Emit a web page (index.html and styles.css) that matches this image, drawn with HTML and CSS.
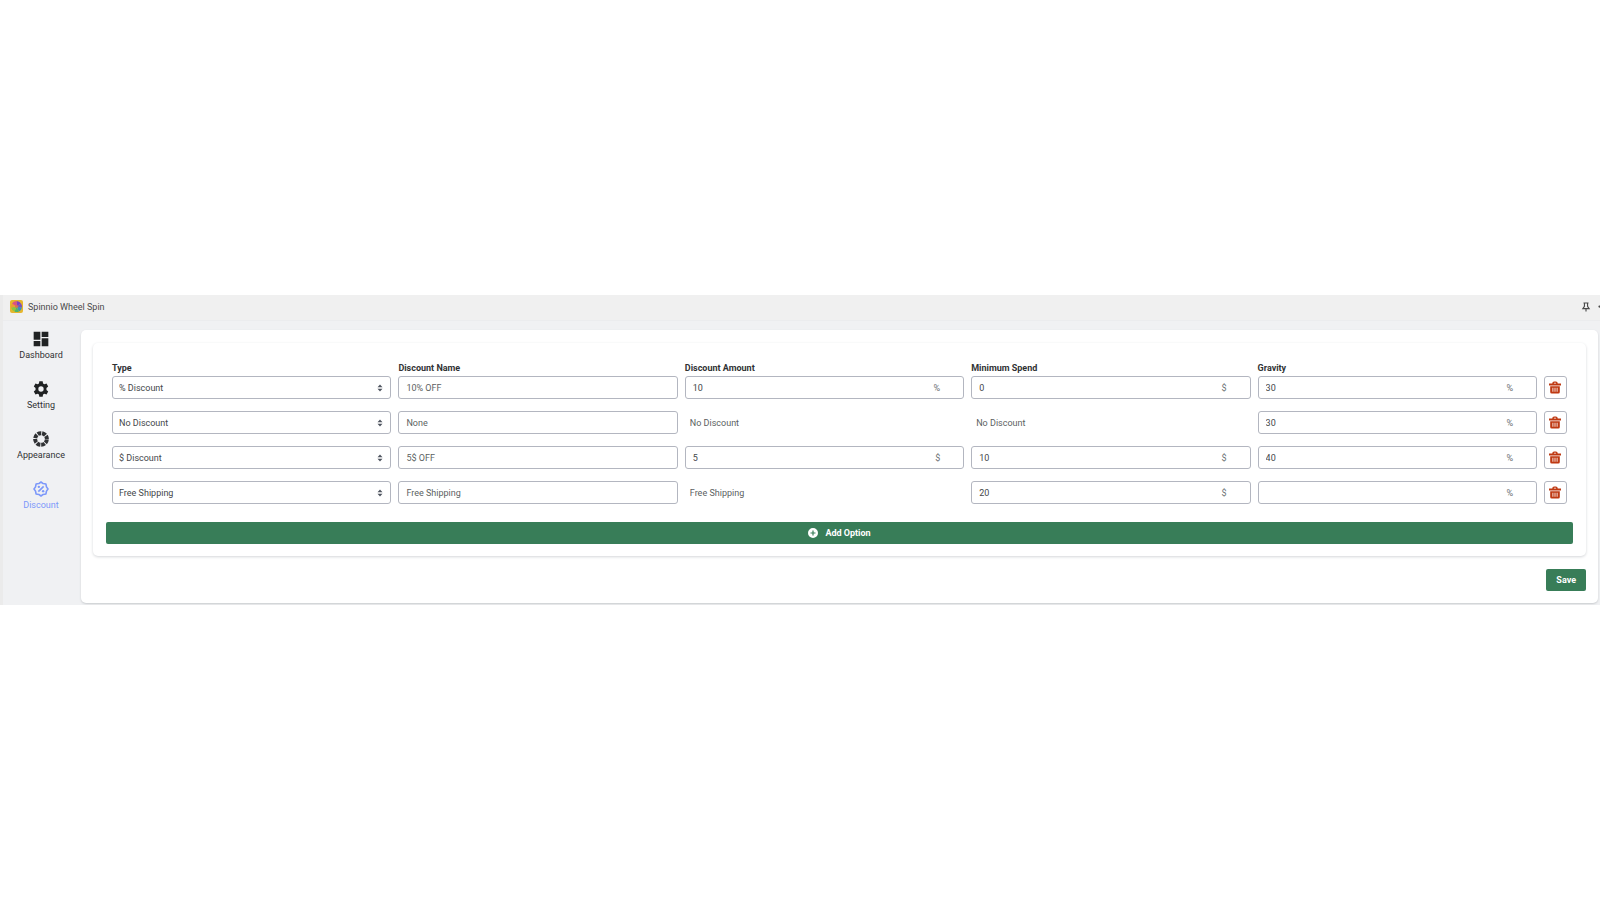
FILE: index.html
```html
<!DOCTYPE html>
<html lang="en">
<head>
<meta charset="utf-8">
<title>Spinnio Wheel Spin</title>
<link rel="stylesheet" href="styles.css">
</head>
<body>
<svg class="defs" aria-hidden="true">
  <symbol id="trash" viewBox="0 0 20 20"><path d="M5.500 3.500V3q0-3 3-3h3q3 0 3 3v.5H20V6.500H0v-3zM8 3.500h4q0-1.500-1-1.500H9q-1 0-1 1.500zM2 8h16v9.500q0 2.500-2.500 2.500h-11q-2.500 0-2.500-2.500zM5.800 10.500v6.500h1.400v-6.500zM9.300 10.500v6.500h1.400v-6.500zM12.800 10.500v6.500h1.400v-6.500z" fill-rule="evenodd"/></symbol>
  <symbol id="updown" viewBox="0 0 6 8"><path d="M3 0.500 5.500 3.300h-5zM3 7.500 0.500 4.700h5z"/></symbol>
</svg>
<div class="app">
  <header class="topbar">
    <svg class="logo" viewBox="0 0 26 26" aria-hidden="true">
      <rect width="26" height="26" rx="4" fill="#e6b62c"/>
      <path d="M13 13 13 2A11 11 0 0 1 22 7z" fill="#7b3fc4"/>
      <path d="M13 13 22 7A11 11 0 0 1 24 15z" fill="#7a4fc0"/>
      <path d="M13 13 24 15A11 11 0 0 1 18 23z" fill="#3f8fb8"/>
      <path d="M13 13 18 23A11 11 0 0 1 9 23z" fill="#4fb56a"/>
      <path d="M13 13 9 23A11 11 0 0 1 2 15z" fill="#8cc63e"/>
      <path d="M13 13 2 15A11 11 0 0 1 4 7z" fill="#ee9a35"/>
      <path d="M13 13 4 7A11 11 0 0 1 13 2z" fill="#dc4f84"/>
      <circle cx="13" cy="13" r="3" fill="#d8754d"/>
    </svg>
    <span class="title">Spinnio Wheel Spin</span>
    <button class="tool" aria-label="Pin"><svg viewBox="0 0 16 16"><path d="M4 1.500h8M5.500 2v5L3 10.500h10L10.500 7V2M8 10.500V15" fill="none" stroke="#4a4a4a" stroke-width="1.800"/></svg></button>
    <button class="more" aria-label="More"><svg viewBox="0 0 16 4"><circle cx="2" cy="2" r="1.500"/><circle cx="8" cy="2" r="1.500"/><circle cx="14" cy="2" r="1.500"/></svg></button>
  </header>
  <div class="body">
    <nav class="side">
      <a href="#dashboard"><svg viewBox="0 0 24 24"><path d="M1 1h10v12H1zM1 15h10v8H1zM13 1h10v8H13zM13 11h10v12H13z"/></svg>Dashboard</a>
      <a href="#setting"><svg viewBox="0 0 24 24"><path fill-rule="evenodd" d="M9.500 0.500h5l.6 3.300 2 1.150 3.200-1.150 2.500 4.400-2.600 2.200v3.200l2.600 2.200-2.500 4.400-3.200-1.150-2 1.150-.6 3.300h-5l-.6-3.300-2-1.150-3.200 1.150-2.500-4.400 2.600-2.200v-3.200L1.200 8.200l2.500-4.400 3.200 1.150 2-1.150zM12 8a4 4 0 1 0 0 8 4 4 0 0 0 0-8z"/></svg>Setting</a>
      <a href="#appearance"><svg viewBox="0 0 24 24"><circle cx="12" cy="12" r="8.800" fill="none" stroke="currentColor" stroke-width="6" stroke-dasharray="5.611 1.300" stroke-dashoffset="-0.650"/></svg>Appearance</a>
      <a href="#discount" class="active" aria-current="page"><svg viewBox="0 0 24 24" ><g fill="none" stroke="currentColor" stroke-width="2.400"><path d="M12 1.500 15.200 3.800 19.400 4.600 20.200 8.800 22.500 12 20.200 15.200 19.400 19.400 15.200 20.200 12 22.500 8.800 20.200 4.600 19.400 3.800 15.200 1.500 12 3.800 8.800 4.600 4.600 8.800 3.800z" stroke-linejoin="round"/><path d="M8 16 16 8"/></g><circle cx="8.800" cy="8.800" r="1.800"/><circle cx="15.200" cy="15.200" r="1.800"/></svg>Discount</a>
    </nav>
    <main class="panel">
      <form class="stack">
        <section class="card">
          <div class="rows">
            <div class="row heads">
              <label for="type1">Type</label><label for="name1">Discount Name</label><label for="amount1">Discount Amount</label><label for="spend1">Minimum Spend</label><label for="gravity1">Gravity</label>
            </div>
            <div class="row">
              <div class="pick"><select id="type1"><option>% Discount</option></select><svg><use href="#updown"/></svg></div>
              <input class="field" id="name1" value="10% OFF">
              <div class="unit"><input id="amount1" value="10"><span>%</span></div>
              <div class="unit"><input id="spend1" value="0"><span>$</span></div>
              <div class="unit"><input id="gravity1" value="30"><span>%</span></div>
              <button type="button" class="del" aria-label="Delete"><svg><use href="#trash"/></svg></button>
            </div>
            <div class="row">
              <div class="pick"><select aria-label="Type"><option>No Discount</option></select><svg><use href="#updown"/></svg></div>
              <input class="field" aria-label="Discount Name" value="None">
              <span class="plain">No Discount</span>
              <span class="plain">No Discount</span>
              <div class="unit"><input aria-label="Gravity" value="30"><span>%</span></div>
              <button type="button" class="del" aria-label="Delete"><svg><use href="#trash"/></svg></button>
            </div>
            <div class="row">
              <div class="pick"><select aria-label="Type"><option>$ Discount</option></select><svg><use href="#updown"/></svg></div>
              <input class="field" aria-label="Discount Name" value="5$ OFF">
              <div class="unit"><input aria-label="Discount Amount" value="5"><span>$</span></div>
              <div class="unit"><input aria-label="Minimum Spend" value="10"><span>$</span></div>
              <div class="unit"><input aria-label="Gravity" value="40"><span>%</span></div>
              <button type="button" class="del" aria-label="Delete"><svg><use href="#trash"/></svg></button>
            </div>
            <div class="row">
              <div class="pick"><select aria-label="Type"><option>Free Shipping</option></select><svg><use href="#updown"/></svg></div>
              <input class="field" aria-label="Discount Name" value="Free Shipping">
              <span class="plain">Free Shipping</span>
              <div class="unit"><input aria-label="Minimum Spend" value="20"><span>$</span></div>
              <div class="unit"><input aria-label="Gravity" value=""><span>%</span></div>
              <button type="button" class="del" aria-label="Delete"><svg><use href="#trash"/></svg></button>
            </div>
          </div>
          <button type="button" class="primary"><svg viewBox="0 0 20 20"><path fill-rule="evenodd" d="M10 0a10 10 0 1 0 0 20 10 10 0 0 0 0-20zM8.800 5h2.400v3.800H15v2.400h-3.800V15H8.800v-3.800H5V8.800h3.800z"/></svg>Add Option</button>
        </section>
        <button type="submit" class="primary save">Save</button>
      </form>
    </main>
  </div>
</div>
</body>
</html>
```
FILE: styles.css
```css
* { box-sizing: border-box; }
body {
  margin: 0;
  min-height: 100vh;
  display: flex;
  flex-direction: column;
  justify-content: center;
  background: #fff;
  color: #303234;
  font: 9px/12px Roboto, "Noto Sans", sans-serif;
  overflow-x: hidden;
}
button, input, select { font: inherit; color: inherit; margin: 0; }
svg { display: block; fill: currentColor; }
.defs { position: absolute; width: 0; height: 0; }
.app { border-left: 3px solid #ebebeb; background: #f0f1f3; overflow: hidden; }
.topbar {
  display: flex;
  align-items: center;
  height: 26px;
  padding: 0 0 2px 7px;
  background: #f0f0f0;
  border-bottom: 1px solid #ebecee;
}
.logo { width: 13px; height: 13px; }
.title { margin-left: 5px; color: #4a4a4a; }
.tool, .more { border: 0; padding: 0; background: none; color: #4a4a4a; flex: none; }
.tool { margin-left: auto; margin-right: 7px; }
.tool svg { width: 10px; height: 10px; }
.more { width: 2px; overflow: hidden; }
.more svg { width: 12px; height: 3px; }
.body { display: flex; padding: 9px 2px 2px 0; }
.side { flex: none; width: 78px; padding-top: 1px; display: flex; flex-direction: column; gap: 18px; }
.side a {
  display: flex;
  flex-direction: column;
  align-items: center;
  gap: 2px;
  height: 32px;
  padding-right: 2px;
  color: #303234;
  text-decoration: none;
}
.side svg { width: 16px; height: 16px; fill: #202223; }
.side a.active, .side .active svg { color: #7c98fa; fill: #7c98fa; }
.panel { flex: 1; padding: 13px 12px 12px; background: #fff; border-radius: 5px; box-shadow: 0 1px 2px #c9cccf; }
.stack { display: flex; flex-direction: column; gap: 13px; }
.card { padding: 19px 13px 12px; border-radius: 5px; box-shadow: 0 1px 3px #d4d6d9; display: flex; flex-direction: column; gap: 18px; }
.rows { padding: 0 6px; display: flex; flex-direction: column; gap: 12px; }
.row { display: grid; grid-template-columns: repeat(5, 1fr) 23px; gap: 7px; align-items: center; }
.heads { font-weight: 700; margin-bottom: -10px; }
.field, .pick select, .unit, .del {
  width: 100%;
  height: 23px;
  border: 1px solid #b3b6c0;
  border-radius: 3px;
  background: #fff;
}
.field { padding: 0 7px; color: #5c5f62; }
.pick { display: grid; align-items: center; }
.pick > * { grid-area: 1 / 1; }
.pick select { appearance: none; padding: 0 6px; color: #44474a; }
.pick svg { justify-self: end; width: 6px; height: 8px; margin-right: 8px; fill: #4f5560; pointer-events: none; }
.unit { display: flex; align-items: center; padding: 0 23px 0 7px; color: #6d7175; }
.unit input { flex: 1; min-width: 0; border: 0; padding: 0; background: none; color: #44474a; }
.plain { padding-left: 5px; color: #5c5f62; }
.del { display: grid; place-items: center; padding: 0; color: #bf3912; }
.del svg { width: 12px; height: 13px; }
.primary {
  display: flex;
  align-items: center;
  justify-content: center;
  gap: 7px;
  height: 22px;
  border: 0;
  border-radius: 2px;
  background: #387d58;
  color: #fff;
  font-weight: 700;
}
.primary svg { width: 10px; height: 10px; }
.save { align-self: flex-end; padding: 0 10px; }
```
